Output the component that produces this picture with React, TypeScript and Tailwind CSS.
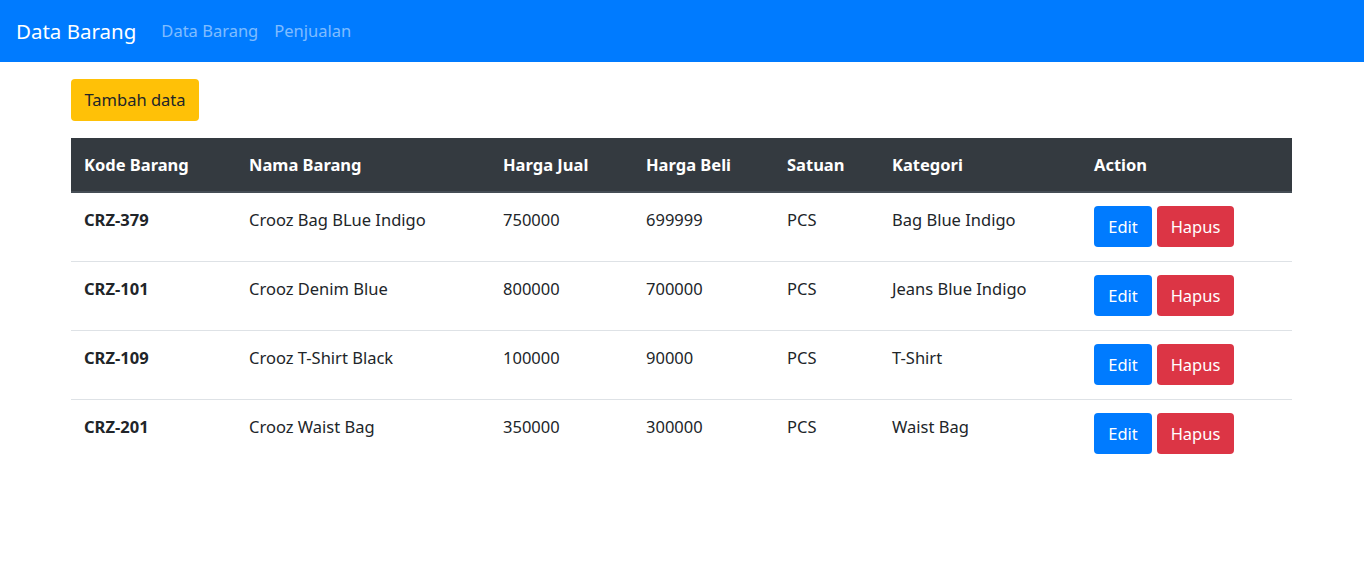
const rows = [
  { kode: "CRZ-379", nama: "Crooz Bag BLue Indigo", jual: "750000", beli: "699999", satuan: "PCS", kategori: "Bag Blue Indigo" },
  { kode: "CRZ-101", nama: "Crooz Denim Blue", jual: "800000", beli: "700000", satuan: "PCS", kategori: "Jeans Blue Indigo" },
  { kode: "CRZ-109", nama: "Crooz T-Shirt Black", jual: "100000", beli: "90000", satuan: "PCS", kategori: "T-Shirt" },
  { kode: "CRZ-201", nama: "Crooz Waist Bag", jual: "350000", beli: "300000", satuan: "PCS", kategori: "Waist Bag" },
];

const cols = ["w-[165px]", "w-[254px]", "w-[143px]", "w-[141px]", "w-[105px]", "w-[202px]", "w-[211px]"];
const heads = ["Kode Barang", "Nama Barang", "Harga Jual", "Harga Beli", "Satuan", "Kategori", "Action"];

export default function App() {
  return (
    <div className="min-h-screen bg-white text-[#212529] text-[16.5px] leading-[26.4px] font-['Noto_Sans',sans-serif]">
      <nav className="flex h-[62px] items-center bg-[#007bff] px-[16px]">
        <span className="mr-[17px] text-[20.5px] text-white">Data Barang</span>
        <div className="flex">
          <span className="px-[8px] text-white/50">Data Barang</span>
          <span className="px-[8px] text-white/50">Penjualan</span>
        </div>
      </nav>

      <div className="ml-[71px] w-[1221px] pt-[17px]">
        <button className="h-[42px] w-[128px] rounded-[4px] bg-[#ffc107] text-[#212529]">
          Tambah data
        </button>

        <table className="mt-[17px] w-full table-fixed border-collapse text-left">
          <colgroup>
            {cols.map((c, i) => (
              <col key={i} className={c} />
            ))}
          </colgroup>
          <thead>
            <tr className="bg-[#343a40] text-white">
              {heads.map((h) => (
                <th key={h} className="border-b-2 border-[#454d55] px-[13px] pt-[14px] pb-[13px] align-bottom font-bold">
                  {h}
                </th>
              ))}
            </tr>
          </thead>
          <tbody>
            {rows.map((r, i) => (
              <tr key={r.kode} className={i > 0 ? "border-t border-[#dee2e6]" : ""}>
                <td className="px-[13px] pt-[14px] pb-[14px] align-top font-bold">{r.kode}</td>
                <td className="px-[13px] pt-[14px] pb-[14px] align-top">{r.nama}</td>
                <td className="px-[13px] pt-[14px] pb-[14px] align-top">{r.jual}</td>
                <td className="px-[13px] pt-[14px] pb-[14px] align-top">{r.beli}</td>
                <td className="px-[13px] pt-[14px] pb-[14px] align-top">{r.satuan}</td>
                <td className="px-[13px] pt-[14px] pb-[14px] align-top">{r.kategori}</td>
                <td className="px-[13px] pt-[13px] pb-[14px] align-top">
                  <div className="flex gap-[5px]">
                    <button className="h-[41px] w-[58px] rounded-[4px] bg-[#007bff] text-white">Edit</button>
                    <button className="h-[41px] w-[77px] rounded-[4px] bg-[#dc3545] text-white">Hapus</button>
                  </div>
                </td>
              </tr>
            ))}
          </tbody>
        </table>
      </div>
    </div>
  );
}
